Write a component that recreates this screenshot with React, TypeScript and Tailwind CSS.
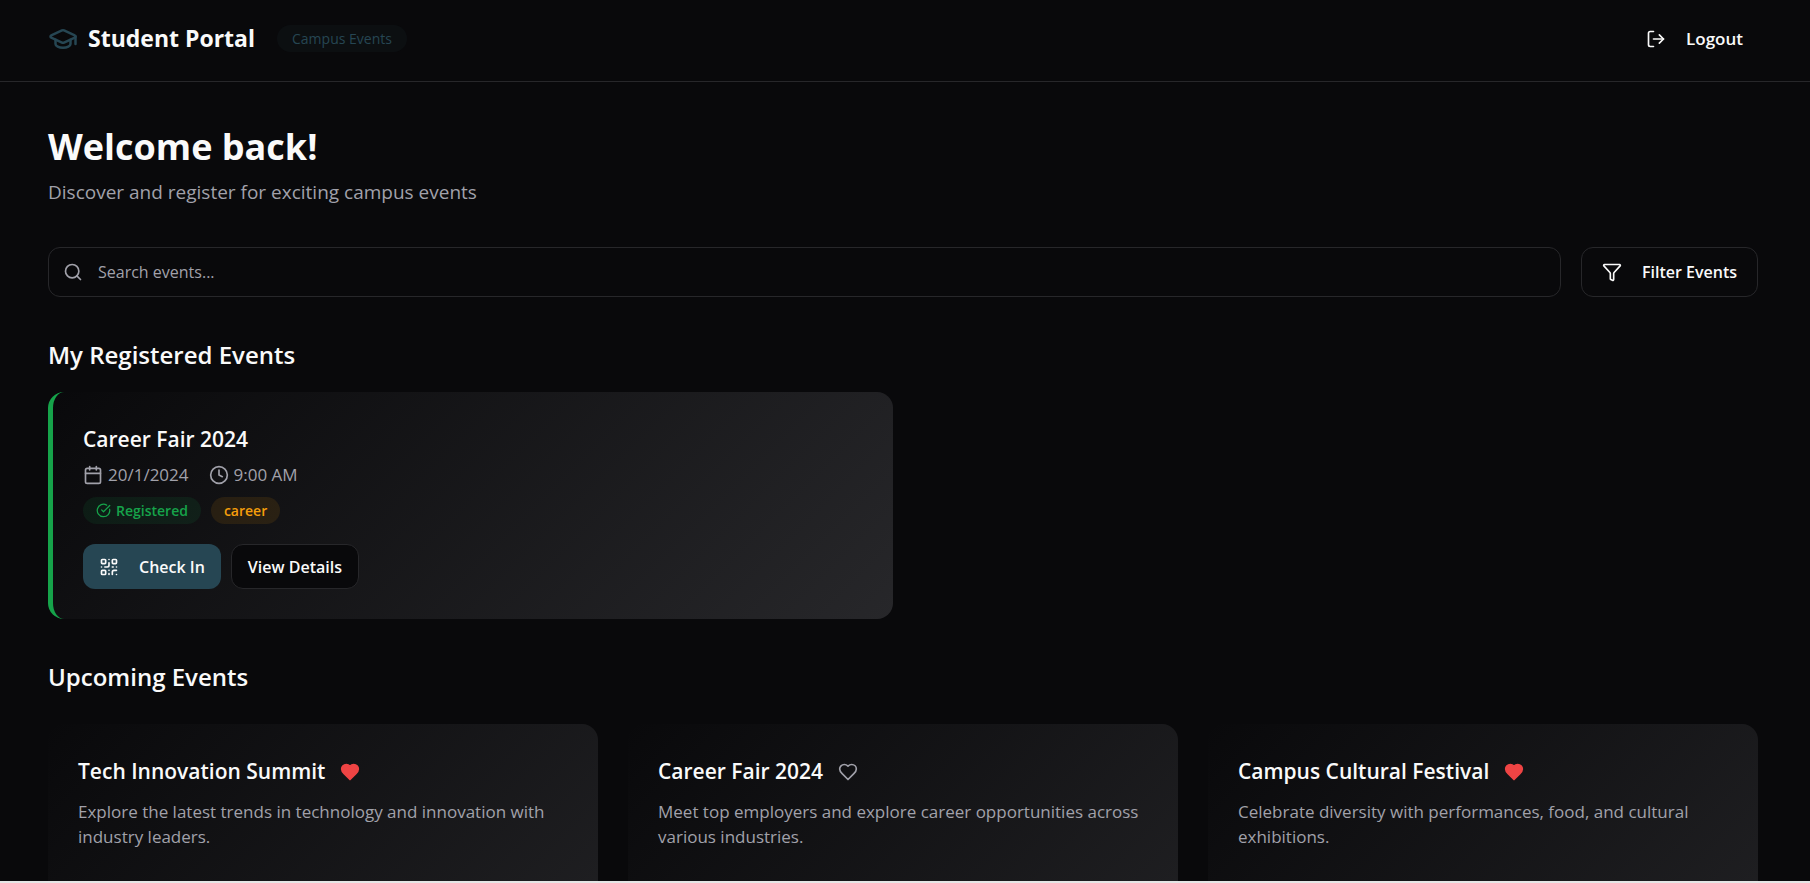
import { Calendar, CircleCheckBig, Clock, Filter, LogOut, QrCode, Search } from "lucide-react";

type EventItem = { title: string; description: string; liked: boolean };

const upcoming: EventItem[] = [
  {
    title: "Tech Innovation Summit",
    description: "Explore the latest trends in technology and innovation with industry leaders.",
    liked: true,
  },
  {
    title: "Career Fair 2024",
    description: "Meet top employers and explore career opportunities across various industries.",
    liked: false,
  },
  {
    title: "Campus Cultural Festival",
    description: "Celebrate diversity with performances, food, and cultural exhibitions.",
    liked: true,
  },
];

function GraduationCapIcon() {
  return (
    <svg
      className="size-[30px] text-[#264653]"
      viewBox="0 0 24 24"
      fill="none"
      stroke="currentColor"
      strokeWidth="2"
      strokeLinecap="round"
      strokeLinejoin="round"
      aria-hidden="true"
    >
      <path d="M21.42 10.922a1 1 0 0 0-.019-1.838L12.83 5.18a2 2 0 0 0-1.66 0L2.6 9.08a1 1 0 0 0 0 1.832l8.57 3.908a2 2 0 0 0 1.66 0z" />
      <path d="M22 10v6" />
      <path d="M6 12.5V16a6 3 0 0 0 12 0v-3.5" />
    </svg>
  );
}

function HeartIcon({ filled }: { filled: boolean }) {
  return (
    <svg
      className={filled ? "size-5 fill-[#ef4444] text-[#ef4444]" : "size-5 fill-none text-[#a1a1aa]"}
      viewBox="0 0 24 24"
      stroke="currentColor"
      strokeWidth="2"
      strokeLinecap="round"
      strokeLinejoin="round"
      aria-hidden="true"
    >
      <path d="M19 14c1.49-1.46 3-3.21 3-5.5A5.5 5.5 0 0 0 16.5 3c-1.76 0-3 .5-4.5 2-1.5-1.5-2.74-2-4.5-2A5.5 5.5 0 0 0 2 8.5c0 2.3 1.5 4.05 3 5.5l7 7Z" />
    </svg>
  );
}

function Header() {
  return (
    <header className="flex shrink-0 items-center justify-between border-b border-[#27272a] pt-4 pr-[52px] pb-5 pl-12">
      <div className="flex items-center gap-[22px]">
        <div className="flex items-center gap-[10px]">
          <GraduationCapIcon />
          <span className="text-[23px] leading-[35px] font-bold">Student Portal</span>
        </div>
        <span className="rounded-full bg-[#264653]/10 px-[15px] text-[14px] leading-[27px] font-medium text-[#264653]">
          Campus Events
        </span>
      </div>
      <button type="button" className="flex h-[45px] items-center gap-5 rounded-xl px-[15px] text-[17px] font-semibold">
        <LogOut className="size-5" />
        Logout
      </button>
    </header>
  );
}

function SearchBar() {
  return (
    <div className="mb-10 flex gap-5">
      <div className="relative flex-1">
        <Search className="absolute top-[15px] left-[15px] size-5 text-[#a1a1aa]" />
        <input
          type="search"
          aria-label="Search events"
          placeholder="Search events..."
          className="h-[50px] w-full rounded-xl border border-[#27272a] bg-[#09090b] pr-4 pl-[49px] text-base placeholder:text-[#a1a1aa]"
        />
      </div>
      <button
        type="button"
        className="flex h-[50px] items-center gap-5 rounded-xl border border-[#27272a] bg-[#09090b] px-5 text-base font-semibold"
      >
        <Filter className="size-5" />
        Filter Events
      </button>
    </div>
  );
}

function RegisteredCard() {
  return (
    <article className="rounded-2xl border-l-[5px] border-[#16a34a] bg-[linear-gradient(135deg,#09090b,#27272a)] p-[30px]">
      <h3 className="mb-[5px] text-[21px] leading-[35px] font-semibold">Career Fair 2024</h3>
      <div className="mb-[10px] flex gap-5 text-[17px] leading-[25px] text-[#a1a1aa]">
        <span className="flex items-center gap-[5px]">
          <Calendar className="size-5" />
          20/1/2024
        </span>
        <span className="flex items-center gap-[5px]">
          <Clock className="size-5" />
          9:00 AM
        </span>
      </div>
      <div className="mb-5 flex gap-[10px] text-[14px] leading-[27px] font-semibold">
        <span className="flex items-center gap-[5px] rounded-full bg-[#16a34a]/10 px-[13px] text-[#16a34a]">
          <CircleCheckBig className="size-[15px]" />
          Registered
        </span>
        <span className="rounded-full bg-[#f59e0b]/10 px-[13px] text-[#f59e0b]">career</span>
      </div>
      <div className="flex gap-[10px] text-base font-semibold">
        <button type="button" className="flex h-[45px] items-center gap-5 rounded-xl bg-[#264653] px-4">
          <QrCode className="size-5" />
          Check In
        </button>
        <button type="button" className="h-[45px] rounded-xl border border-[#27272a] bg-[#09090b] px-4">
          View Details
        </button>
      </div>
    </article>
  );
}

function EventCard({ event }: { event: EventItem }) {
  return (
    <article className="min-h-[450px] rounded-2xl bg-[linear-gradient(135deg,#09090b,#27272a)] p-[30px]">
      <div className="mb-[10px] flex items-center gap-[15px]">
        <h3 className="text-[21px] leading-[35px] font-semibold">{event.title}</h3>
        <button type="button" aria-label="Favourite" aria-pressed={event.liked}>
          <HeartIcon filled={event.liked} />
        </button>
      </div>
      <p className="text-[17px] leading-[25px] text-[#a1a1aa]">{event.description}</p>
    </article>
  );
}

export default function App() {
  return (
    <div className="flex h-screen flex-col border-b-2 border-[#e5e5e5] bg-[#09090b] font-['Open_Sans','Noto_Sans',sans-serif] text-[#fafafa]">
      <Header />
      <main className="min-h-0 flex-1 overflow-y-auto pt-[42px] pr-[52px] pl-12 [scrollbar-width:none]">
        <h1 className="mb-2 text-4xl leading-[45px] font-bold">Welcome back!</h1>
        <p className="mb-10 text-[19px] leading-[30px] text-[#a1a1aa]">
          Discover and register for exciting campus events
        </p>
        <SearchBar />
        <section className="mb-10">
          <h2 className="mb-5 text-2xl leading-[35px] font-semibold">My Registered Events</h2>
          <div className="grid grid-cols-2 gap-5">
            <RegisteredCard />
          </div>
        </section>
        <section>
          <h2 className="mb-[30px] text-2xl leading-[35px] font-semibold">Upcoming Events</h2>
          <div className="grid grid-cols-3 gap-[30px]">
            {upcoming.map((event) => (
              <EventCard key={event.title} event={event} />
            ))}
          </div>
        </section>
      </main>
    </div>
  );
}
